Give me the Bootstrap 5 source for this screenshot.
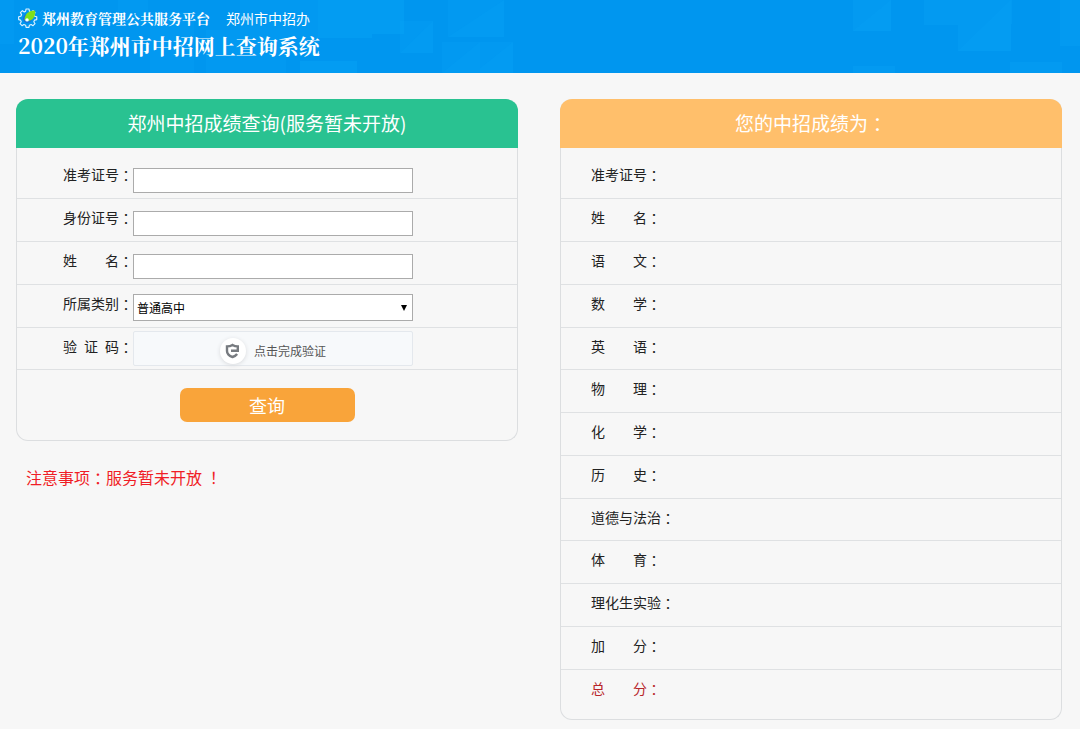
<!DOCTYPE html>
<html lang="zh-CN">
<head>
<meta charset="utf-8">
<meta name="viewport" content="width=device-width, initial-scale=1">
<title>2020年郑州市中招网上查询系统</title>
<link href="https://cdn.jsdelivr.net/npm/bootstrap@5.3.0/dist/css/bootstrap.min.css" rel="stylesheet">
<style>
  body { background: #f7f7f7; color: #222; font: 14px/20px "Noto Sans CJK SC", sans-serif; }
  .topbar { background: #0096ef; color: #fff; padding: 8px 18px 10px; overflow: hidden; }
  .topbar svg.pattern { height: 73px; width: 1080px; z-index: 0; }
  .topbar a { color: #fff; }
  .sys-title { font: bold 21px/35px "Noto Serif CJK SC", "Noto Sans CJK SC", serif; }
  .site-name { font-family: "Noto Serif CJK SC", "Noto Sans CJK SC", serif; }
  .page { padding: 26px 18px 8px 16px; }
  .page > .row { --bs-gutter-x: 42px; }
  .panel { border: 1px solid #dcdee0; border-top: 0; border-radius: 12px; }
  .panel-title { margin: 0 -1px; height: 49px; border-radius: 12px 12px 0 0; color: #fff; font-size: 19px; line-height: 48px; text-align: center; font-weight: 400; }
  .bg-query { background: #29c291; }
  .bg-result { background: #ffbf6b; }
  .zh-mid { font-family: "Noto Sans CJK TC", sans-serif; vertical-align: -1px; line-height: 1; }
  .line { height: 43px; border-bottom: 1px solid #dfe1e3; }
  .line:first-child { height: 51px; padding-top: 8px; }
  .line:nth-child(4n+5) { height: 42px; }
  .line > label { width: 116px; text-align: right; padding-top: 8px; flex: none; white-space: pre; }
  .field { width: 56%; border: 1px solid #ababab; border-radius: 0; background: #fff; padding: 0 3px; height: 25px; margin-top: 12px; }
  select.field { height: 27px; margin-top: 9px; font-size: 12px; appearance: none; color: #000;
    background: #fff url("data:image/svg+xml,%3Csvg xmlns='http://www.w3.org/2000/svg' width='6' height='6'%3E%3Cpath d='M0 0h6L3 6z'/%3E%3C/svg%3E") no-repeat right 5px center; }
  .captcha { width: 56%; height: 35px; margin-top: 3px; border: 1px solid #e4e8ed; border-radius: 2px; background: #f7f9fb; color: #555; font-size: 12px; padding: 5px 0 0; }
  .captcha .disc { width: 26px; height: 26px; background: #fff; box-shadow: 0 1px 4px #d8dadd; }
  .submit-area { padding: 18px 0; }
  .btn-search { width: 35%; height: 34px; border: 0; border-radius: 7px; background: #f9a43a; color: #fff; font-size: 18px; line-height: 32px; }
  .btn-search:hover { background: #ee9828; color: #fff; }
  .notice { margin: 24px 10px 0; color: #f01d26; font-size: 16px; line-height: 24px; }
  .scores tr { height: 43px; border-bottom: 1px solid #dfe1e3; }
  .scores tr:first-child { height: 50px; }
  .scores tr:nth-child(4n+5) { height: 42px; }
  .scores tr:first-child th { padding-top: 16px; }
  .scores tr:last-child { height: 50px; border-bottom: 0; }
  .scores th { width: 150px; padding: 8px 0 0 30px; font-weight: 400; vertical-align: top; white-space: pre; }
  .scores .total { color: #b8262b; }
</style>
</head>
<body>
<header class="topbar position-relative">
  <svg class="pattern position-absolute top-0 start-0" viewBox="0 0 1080 73" aria-hidden="true">
    <g fill="#10b4ff" fill-opacity=".2">
      <path d="M318 0h54v38h-54zM350 0h54v34h-54zM300 61h57v12h-57z"/>
      <path d="M400 21h33v32h-33zM448 0h56v37h-56zM442 42h38v31h-38zM474 42h39v31h-39z" fill-opacity=".13"/>
      <path d="M433 21v32h-33zM504 0v37h-56zM480 42v31h-38zM513 42v31h-39z" fill-opacity=".1"/>
      <path d="M853 0h38v31h-38zM924 0h54v25h-54zM955 0h57v24h-57zM958 24h53v27h-53zM853 66h42v7h-42zM1010 62h52v11h-52zM1060 0h20v46h-20z" fill-opacity=".16"/>
      <path d="M891 0v31h-38zM1011 0v51h-53z" fill-opacity=".1"/>
      <path d="M0 0h14v44H0zM20 50h50v23H20zM118 0h30v24h-30zM150 12h44v61h-44zM206 30h80v43h-80zM240 0h78v38h-78z" fill-opacity=".12"/>
    </g>
  </svg>
  <div class="position-relative">
    <div class="d-flex align-items-center">
      <svg width="20" height="20" viewBox="0 0 21 21" aria-hidden="true">
        <g fill="none" stroke="#dff2ff" stroke-width="1.2" stroke-linejoin="round">
          <path d="M8.5 1h3l.5 2.3 1.8.8 2-1.3 2.1 2.1-1.3 2 .8 1.8 2.3.5v3l-2.3.5-.8 1.8 1.3 2-2.1 2.1-2-1.3-1.8.8-.5 2.3h-3L8 18.100l-1.800-.8-2 1.300-2.100-2.100 1.300-2-.8-1.800L.7 12.200v-3L3 8.700l.8-1.800-1.300-2 2.100-2.100 2 1.300 1.400-.8z"/>
          <circle cx="10" cy="11" r="4" stroke="#2a63cf"/>
        </g>
        <path d="M7 12.500C7 6 11 2.500 18 2.500c.5 6-2 11-9 11z" fill="#7fe01c"/>
        <circle cx="9.500" cy="12.500" r="1.800" fill="#fff"/>
      </svg>
      <a href="#" class="site-name fw-bold text-decoration-none ms-1 me-3">郑州教育管理公共服务平台</a>
      <a href="#" class="text-decoration-none">郑州市中招办</a>
    </div>
    <h1 class="sys-title mb-0">2020年郑州市中招网上查询系统</h1>
  </div>
</header>

<main class="page">
  <div class="row">
    <section class="col-6">
      <form class="panel" onsubmit="return false">
        <h2 class="panel-title bg-query mb-0">郑州中招成绩查询(服务暂未开放)</h2>
        <div>
          <div class="line d-flex align-items-start"><label for="exam">准考证号<span class="zh-mid" lang="zh-TW">：</span></label><input id="exam" type="text" class="field"></div>
          <div class="line d-flex align-items-start"><label for="idno">身份证号<span class="zh-mid" lang="zh-TW">：</span></label><input id="idno" type="text" class="field"></div>
          <div class="line d-flex align-items-start"><label for="name">姓&emsp;&emsp;名<span class="zh-mid" lang="zh-TW">：</span></label><input id="name" type="text" class="field"></div>
          <div class="line d-flex align-items-start"><label for="kind">所属类别<span class="zh-mid" lang="zh-TW">：</span></label><select id="kind" class="field"><option>普通高中</option></select></div>
          <div class="line d-flex align-items-start"><label for="verify">验&ensp;证&ensp;码<span class="zh-mid" lang="zh-TW">：</span></label>
            <button id="verify" type="button" class="captcha d-flex align-items-center justify-content-center">
              <span class="disc rounded-circle d-flex align-items-center justify-content-center me-2">
                <svg width="15" height="16" viewBox="0 0 15 16" fill="none" stroke="#777b80" stroke-width="2.400" aria-hidden="true"><path d="M12.800 8V3.400C10.500 3.400 9 2.900 7.500 2 6 2.900 4.500 3.400 2 3.400V8c0 3.200 2.500 5 5.500 6 2-.6 3.600-1.600 4.600-3M6 7.700h8"/></svg>
              </span>点击完成验证
            </button>
          </div>
        </div>
        <div class="submit-area text-center"><button type="submit" class="btn btn-search p-0">查询</button></div>
      </form>
      <p class="notice">注意事项<span class="zh-mid" lang="zh-TW">：</span>服务暂未开放 <span lang="zh-TW">！</span></p>
    </section>

    <section class="col-6">
      <div class="panel">
        <h2 class="panel-title bg-result mb-0">您的中招成绩为<span class="zh-mid" lang="zh-TW">：</span></h2>
        <table class="scores w-100">
          <tbody>
            <tr><th scope="row">准考证号<span class="zh-mid" lang="zh-TW">：</span></th><td></td></tr>
            <tr><th scope="row">姓&emsp;&emsp;名<span class="zh-mid" lang="zh-TW">：</span></th><td></td></tr>
            <tr><th scope="row">语&emsp;&emsp;文<span class="zh-mid" lang="zh-TW">：</span></th><td></td></tr>
            <tr><th scope="row">数&emsp;&emsp;学<span class="zh-mid" lang="zh-TW">：</span></th><td></td></tr>
            <tr><th scope="row">英&emsp;&emsp;语<span class="zh-mid" lang="zh-TW">：</span></th><td></td></tr>
            <tr><th scope="row">物&emsp;&emsp;理<span class="zh-mid" lang="zh-TW">：</span></th><td></td></tr>
            <tr><th scope="row">化&emsp;&emsp;学<span class="zh-mid" lang="zh-TW">：</span></th><td></td></tr>
            <tr><th scope="row">历&emsp;&emsp;史<span class="zh-mid" lang="zh-TW">：</span></th><td></td></tr>
            <tr><th scope="row">道德与法治<span class="zh-mid" lang="zh-TW">：</span></th><td></td></tr>
            <tr><th scope="row">体&emsp;&emsp;育<span class="zh-mid" lang="zh-TW">：</span></th><td></td></tr>
            <tr><th scope="row">理化生实验<span class="zh-mid" lang="zh-TW">：</span></th><td></td></tr>
            <tr><th scope="row">加&emsp;&emsp;分<span class="zh-mid" lang="zh-TW">：</span></th><td></td></tr>
            <tr class="total"><th scope="row">总&emsp;&emsp;分<span class="zh-mid" lang="zh-TW">：</span></th><td></td></tr>
          </tbody>
        </table>
      </div>
    </section>
  </div>
</main>
<script src="https://cdn.jsdelivr.net/npm/bootstrap@5.3.0/dist/js/bootstrap.bundle.min.js"></script>
</body>
</html>
